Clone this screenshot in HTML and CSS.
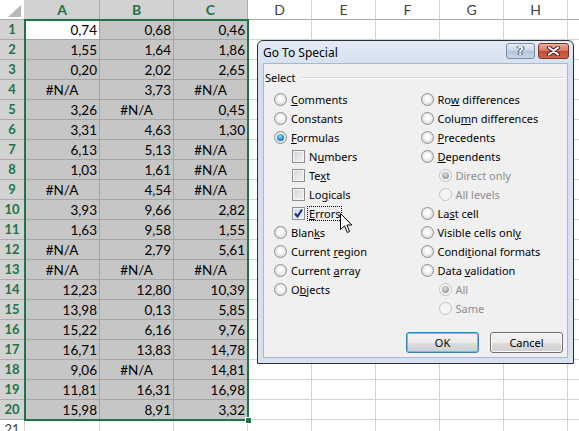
FILE: index.html
```html
<!doctype html>
<html>
  <head>
    <meta charset="UTF-8">
    <title>Go To Special</title>
    <link rel="stylesheet" href="styles.css">
  </head>
  <body>
    <div class="sheet">
      <div class="row head">
        <div class="corner">
          <svg width="25" height="20" viewBox="0 0 25 20"><polygon points="8,17 21,17 21,5" fill="#b8b8b8"/></svg>
        </div>
        <div class="hd on">A</div>
        <div class="hd on">B</div>
        <div class="hd on">C</div>
        <div class="hd">D</div>
        <div class="hd">E</div>
        <div class="hd">F</div>
        <div class="hd">G</div>
        <div class="hd">H</div>
        <div class="hd"></div>
      </div>

      <div class="row"><div class="rh on">1</div><div class="cell act">0,74</div><div class="cell">0,68</div><div class="cell">0,46</div><div class="rest"></div></div>
      <div class="row"><div class="rh on">2</div><div class="cell">1,55</div><div class="cell">1,64</div><div class="cell">1,86</div><div class="rest"></div></div>
      <div class="row"><div class="rh on">3</div><div class="cell">0,20</div><div class="cell">2,02</div><div class="cell">2,65</div><div class="rest"></div></div>
      <div class="row"><div class="rh on">4</div><div class="cell err">#N/A</div><div class="cell">3,73</div><div class="cell err">#N/A</div><div class="rest"></div></div>
      <div class="row"><div class="rh on">5</div><div class="cell">3,26</div><div class="cell err">#N/A</div><div class="cell">0,45</div><div class="rest"></div></div>
      <div class="row"><div class="rh on">6</div><div class="cell">3,31</div><div class="cell">4,63</div><div class="cell">1,30</div><div class="rest"></div></div>
      <div class="row"><div class="rh on">7</div><div class="cell">6,13</div><div class="cell">5,13</div><div class="cell err">#N/A</div><div class="rest"></div></div>
      <div class="row"><div class="rh on">8</div><div class="cell">1,03</div><div class="cell">1,61</div><div class="cell err">#N/A</div><div class="rest"></div></div>
      <div class="row"><div class="rh on">9</div><div class="cell err">#N/A</div><div class="cell">4,54</div><div class="cell err">#N/A</div><div class="rest"></div></div>
      <div class="row"><div class="rh on">10</div><div class="cell">3,93</div><div class="cell">9,66</div><div class="cell">2,82</div><div class="rest"></div></div>
      <div class="row"><div class="rh on">11</div><div class="cell">1,63</div><div class="cell">9,58</div><div class="cell">1,55</div><div class="rest"></div></div>
      <div class="row"><div class="rh on">12</div><div class="cell err">#N/A</div><div class="cell">2,79</div><div class="cell">5,61</div><div class="rest"></div></div>
      <div class="row"><div class="rh on">13</div><div class="cell err">#N/A</div><div class="cell err">#N/A</div><div class="cell err">#N/A</div><div class="rest"></div></div>
      <div class="row"><div class="rh on">14</div><div class="cell">12,23</div><div class="cell">12,80</div><div class="cell">10,39</div><div class="rest"></div></div>
      <div class="row"><div class="rh on">15</div><div class="cell">13,98</div><div class="cell">0,13</div><div class="cell">5,85</div><div class="rest"></div></div>
      <div class="row"><div class="rh on">16</div><div class="cell">15,22</div><div class="cell">6,16</div><div class="cell">9,76</div><div class="rest"></div></div>
      <div class="row"><div class="rh on">17</div><div class="cell">16,71</div><div class="cell">13,83</div><div class="cell">14,78</div><div class="rest"></div></div>
      <div class="row"><div class="rh on">18</div><div class="cell">9,06</div><div class="cell err">#N/A</div><div class="cell">14,81</div><div class="rest"></div></div>
      <div class="row"><div class="rh on">19</div><div class="cell">11,81</div><div class="cell">16,31</div><div class="cell">16,98</div><div class="rest"></div></div>
      <div class="row"><div class="rh on">20</div><div class="cell">15,98</div><div class="cell">8,91</div><div class="cell">3,32</div><div class="rest"></div></div>
      <div class="row"><div class="rh">21</div><div class="cell blank"></div><div class="cell blank"></div><div class="cell blank"></div><div class="rest"></div></div>

      <div class="selection"><span class="handle"></span></div>
    </div>

    <div class="dialog">
      <div class="titlebar">
        <span class="title">Go To Special</span>
        <span class="tb-btn help">?</span>
        <span class="tb-btn close">
          <svg width="15" height="10" viewBox="0 0 15 10"><path d="M3,1.5 L12,8.5 M12,1.5 L3,8.5" stroke="#4a1a12" stroke-width="4" stroke-linecap="round"/><path d="M3,1.5 L12,8.5 M12,1.5 L3,8.5" stroke="#fff" stroke-width="2.2" stroke-linecap="round"/></svg>
        </span>
      </div>

      <div class="dlg-body">
        <div class="group-label">Select</div>

        <div class="options">
          <div class="col">
            <div class="opt"><span class="radio"></span><span class="lbl"><u>C</u>omments</span></div>
            <div class="opt"><span class="radio"></span><span class="lbl">Constants</span></div>
            <div class="opt"><span class="radio on"></span><span class="lbl"><u>F</u>ormulas</span></div>
            <div class="opt sub"><span class="check"></span><span class="lbl">N<u>u</u>mbers</span></div>
            <div class="opt sub"><span class="check"></span><span class="lbl">Te<u>x</u>t</span></div>
            <div class="opt sub"><span class="check"></span><span class="lbl">Lo<u>g</u>icals</span></div>
            <div class="opt sub"><span class="check on"><svg width="11" height="11" viewBox="0 0 11 11"><path d="M2,5.5 L4.5,8.5 L9,1.5" fill="none" stroke="#1d2f8a" stroke-width="2"/></svg></span><span class="lbl focus"><u>E</u>rrors</span></div>
            <div class="opt"><span class="radio"></span><span class="lbl">Blan<u>k</u>s</span></div>
            <div class="opt"><span class="radio"></span><span class="lbl">Current <u>r</u>egion</span></div>
            <div class="opt"><span class="radio"></span><span class="lbl">Current <u>a</u>rray</span></div>
            <div class="opt"><span class="radio"></span><span class="lbl">O<u>b</u>jects</span></div>
          </div>
          <div class="col">
            <div class="opt"><span class="radio"></span><span class="lbl">Ro<u>w</u> differences</span></div>
            <div class="opt"><span class="radio"></span><span class="lbl">Colu<u>m</u>n differences</span></div>
            <div class="opt"><span class="radio"></span><span class="lbl"><u>P</u>recedents</span></div>
            <div class="opt"><span class="radio"></span><span class="lbl"><u>D</u>ependents</span></div>
            <div class="opt sub off"><span class="radio on"></span><span class="lbl">Direct only</span></div>
            <div class="opt sub off"><span class="radio"></span><span class="lbl">All levels</span></div>
            <div class="opt"><span class="radio"></span><span class="lbl">La<u>s</u>t cell</span></div>
            <div class="opt"><span class="radio"></span><span class="lbl">Visible cells onl<u>y</u></span></div>
            <div class="opt"><span class="radio"></span><span class="lbl">Condi<u>t</u>ional formats</span></div>
            <div class="opt"><span class="radio"></span><span class="lbl">Data <u>v</u>alidation</span></div>
            <div class="opt sub off"><span class="radio on"></span><span class="lbl">All</span></div>
            <div class="opt sub off"><span class="radio"></span><span class="lbl">Same</span></div>
          </div>
        </div>

        <div class="buttons">
          <button class="btn default">OK</button>
          <button class="btn">Cancel</button>
        </div>
      </div>
    </div>

    <svg class="cursor" width="13" height="21" viewBox="0 0 13 21"><path d="M0.5,0.5 L0.5,16.5 L4.5,12.8 L7.3,19.5 L9.6,18.5 L6.9,12 L11.8,12 Z" fill="#fff" stroke="#000" stroke-width="1" stroke-linejoin="miter"/></svg>
  </body>
</html>
```

FILE: styles.css
```css
* {
  margin: 0;
  padding: 0;
  box-sizing: border-box;
}

body {
  width: 579px;
  height: 431px;
  overflow: hidden;
  position: relative;
  background: #ffffff;
  font-family: Lato, "Liberation Sans", sans-serif;
}

/* Sheet grid */
.sheet {
  position: relative;
  width: 640px;
}

.row {
  display: flex;
  height: 20px;
}

.row > * {
  flex: none;
  height: 20px;
  border-right: 1px solid #d4d4d4;
  border-bottom: 1px solid #d4d4d4;
}

.row > :nth-child(1) { width: 25px; }
.row > :nth-child(2) { width: 75px; }
.row > :nth-child(3),
.row > :nth-child(4) { width: 74px; }

.hd {
  width: 64px;
  text-align: center;
  font-size: 14px;
  line-height: 19px;
  color: #444444;
  border-bottom-color: #ababab !important;
}

.hd.on {
  background: #d2d2d2;
  color: #217346;
  font-weight: 700;
  border-right-color: #ababab;
}

.corner {
  border-bottom-color: #ababab !important;
}

.corner svg {
  display: block;
}

.rh {
  text-align: center;
  font-size: 13px;
  line-height: 19px;
  color: #444444;
}

.rh.on {
  background: #d2d2d2;
  color: #217346;
  font-weight: 700;
  border-bottom-color: #ababab;
}

.cell {
  background: #c6c6c6;
  border-color: #a5a5a5 !important;
  text-align: right;
  padding-right: 2px;
  font-size: 13.5px;
  line-height: 20px;
  color: #000000;
}

.cell.err {
  text-align: center;
  padding-right: 0;
}

.cell.act {
  background: #ffffff;
}

.cell.blank {
  background: #ffffff;
  border-color: #d4d4d4 !important;
}

.rest {
  flex: 1 !important;
  border-right: none !important;
  background: repeating-linear-gradient(to right, transparent 0 63px, #d4d4d4 63px 64px);
}

.selection {
  position: absolute;
  left: 24px;
  top: 19px;
  width: 225px;
  height: 402px;
  border: 2px solid #217346;
}

.handle {
  position: absolute;
  right: -5px;
  bottom: -5px;
  width: 7px;
  height: 7px;
  background: #217346;
  border: 1px solid #ffffff;
}

/* Dialog */
.dialog {
  position: absolute;
  left: 257px;
  top: 40px;
  width: 317px;
  height: 324px;
  border: 1px solid #2e3238;
  border-radius: 6px 6px 0 0;
  background: linear-gradient(#e2ebf6, #d3dfee 30px, #d6e2f0);
  display: flex;
  flex-direction: column;
  font-family: "Noto Sans", "Open Sans", sans-serif;
  font-size: 11px;
  color: #000000;
}

.titlebar {
  height: 22px;
  display: flex;
  align-items: flex-start;
  padding: 2px 4px 0 5px;
}

.title {
  flex: 1;
  font-size: 12px;
  line-height: 20px;
}

.tb-btn {
  height: 16px;
  border-radius: 3px;
  display: flex;
  align-items: center;
  justify-content: center;
}

.help {
  width: 29px;
  margin-right: 3px;
  border: 1px solid #7d8ca3;
  background: linear-gradient(#e7eef7, #c6d4e6 50%, #b3c4da 51%, #c9d7e8);
  color: #ffffff;
  font-family: "DejaVu Sans", sans-serif;
  font-weight: 700;
  font-size: 12px;
  text-shadow: 0 0 1px #3b4a60, 0 0 1px #3b4a60, 1px 0 0 #3b4a60, -1px 0 0 #3b4a60;
}

.close {
  width: 31px;
  border: 1px solid #7b3528;
  background: linear-gradient(#eab0a2, #d8735e 50%, #c24a33 51%, #d2634b);
}

.close svg {
  display: block;
}

.dlg-body {
  flex: 1;
  margin: 0 5px 5px 5px;
  background: #f0f0f0;
  border: 1px solid #a9b8ca;
  display: flex;
  flex-direction: column;
}

.group-label {
  display: flex;
  align-items: center;
  height: 16px;
  margin: 6px 3px 0 1px;
  line-height: 16px;
}

.group-label::after {
  content: "";
  flex: 1;
  margin-left: 6px;
  border-top: 1px solid #d5d5d5;
  border-bottom: 1px solid #ffffff;
}

.options {
  display: flex;
  margin-top: 4px;
  padding-left: 10px;
}

.col {
  width: 150px;
}

.opt {
  display: flex;
  align-items: center;
  height: 19px;
}

.opt.sub {
  padding-left: 18px;
}

.lbl {
  margin-left: 2px;
  padding: 0 1px;
  border: 1px dotted transparent;
  line-height: 13px;
  white-space: nowrap;
}

.lbl.focus {
  border-color: #000000;
}

.off .lbl {
  color: #8d8d8d;
}

.radio {
  position: relative;
  width: 13px;
  height: 13px;
  border-radius: 50%;
  border: 1px solid #8e8f8f;
  background: radial-gradient(circle at 50% 45%, #ffffff 20%, #dadada 75%, #f4f4f4);
}

.radio.on::after {
  content: "";
  position: absolute;
  left: 2px;
  top: 2px;
  width: 7px;
  height: 7px;
  border-radius: 50%;
  background: radial-gradient(circle at 45% 35%, #8fdcff, #1c8fd6 55%, #0e4f8c);
}

.off .radio {
  border-color: #c4c4c4;
  background: #f4f4f4;
}

.off .radio.on::after {
  background: radial-gradient(circle at 45% 35%, #e0e0e0, #9a9a9a 70%);
}

.check {
  width: 13px;
  height: 13px;
  border: 1px solid #8e8f8f;
  background: linear-gradient(135deg, #d0d4d9, #f5f5f5);
  box-shadow: inset 0 0 0 1px #f4f4f4;
}

.check.on {
  background: linear-gradient(135deg, #c6d6ea, #eaf1fa);
}

.check svg {
  display: block;
}

.buttons {
  display: flex;
  justify-content: flex-end;
  gap: 11px;
  margin-top: 14px;
  padding-right: 4px;
}

.btn {
  width: 73px;
  height: 21px;
  border: 1px solid #707070;
  border-radius: 3px;
  background: linear-gradient(#f2f2f2, #ebebeb 50%, #dddddd 51%, #cfcfcf);
  box-shadow: inset 0 0 0 1px #fcfcfc;
  font-family: "Noto Sans", "Open Sans", sans-serif;
  font-size: 11px;
  color: #000000;
}

.btn.default {
  border-color: #3c7fb1;
  box-shadow: inset 0 0 0 1px #48d0f9;
}

.cursor {
  position: absolute;
  left: 340px;
  top: 213px;
}
```
